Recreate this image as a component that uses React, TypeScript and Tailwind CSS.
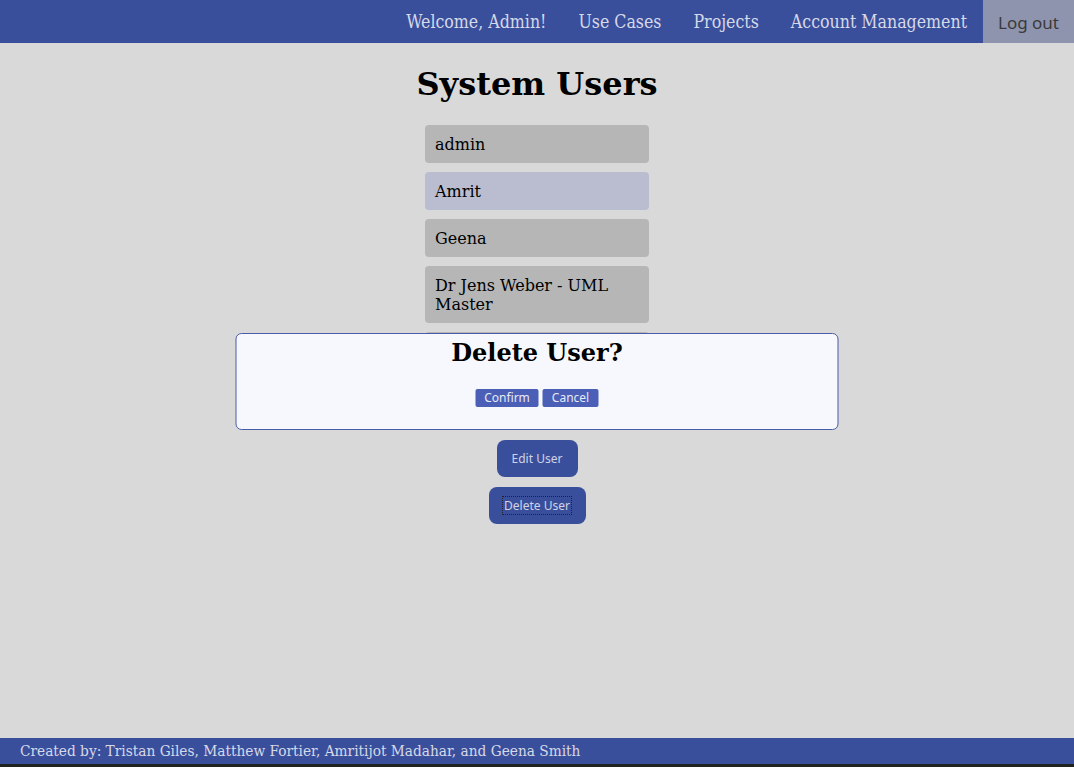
import React from "react";

const condSerif = { fontFamily: '"DejaVu Serif Condensed", "DejaVu Serif", serif', fontStretch: "condensed" as const };

export default function App() {
  const users = ["admin", "Amrit", "Geena", "Dr Jens Weber - UML Master", "", ""];
  return (
    <div className="min-h-[767px] bg-[#d9d9d9] flex flex-col relative" style={{ fontFamily: '"DejaVu Serif", serif' }}>
      <nav className="h-[43px] bg-[#3a4f9c] flex justify-end items-stretch">
        {["Welcome, Admin!", "Use Cases", "Projects", "Account Management"].map((t) => (
          <div key={t} className="px-4 pt-[1px] flex items-center text-[17.6px] text-[#d6d9e8]" style={condSerif}>
            {t}
          </div>
        ))}
        <div
          className="w-[91px] bg-[#8e94ae] flex items-center justify-center text-[17px] text-[#3a3a3a] pt-[2px]"
          style={{ fontFamily: '"Noto Sans", sans-serif' }}
        >
          Log out
        </div>
      </nav>

      <main className="flex-1 flex flex-col items-center">
        <h1 className="text-[32px] font-bold text-black mt-[22px] mb-[22px] leading-[38px]">System Users</h1>
        <div className="relative flex flex-col items-center">
          <div className="flex flex-col gap-[9px] w-[224px]">
            {users.map((u, i) => (
              <div
                key={i}
                className={`rounded-[4px] pl-[10px] pr-2 pt-[10px] pb-[9px] min-h-[38px] text-[16px] leading-[19px] text-black ${
                  i === 1 ? "bg-[#babdcf]" : "bg-[#b6b6b6]"
                }`}
              >
                {u}
              </div>
            ))}
          </div>
          <div className="absolute left-1/2 -translate-x-1/2 top-[208px] w-[603px] h-[97px] bg-[#f7f8fd] border border-[#4a5ba8] rounded-[6px] flex flex-col items-center">
            <div className="text-[24px] font-bold text-black leading-[28px] mt-[5px]">Delete User?</div>
            <div className="flex gap-[4px] mt-[22px]" style={{ fontFamily: '"Noto Sans", sans-serif' }}>
              <button className="h-[18px] w-[63px] bg-[#4a5fb5] text-[#e8eaf6] text-[12px] rounded-[2px] leading-[18px]">Confirm</button>
              <button className="h-[18px] w-[56px] bg-[#4a5fb5] text-[#e8eaf6] text-[12px] rounded-[2px] leading-[18px]">Cancel</button>
            </div>
          </div>
        </div>
        <div className="flex flex-col items-center gap-[10px] mt-[23px]" style={{ fontFamily: '"Noto Sans", sans-serif' }}>
          <button className="h-[37px] w-[81px] rounded-[8px] bg-[#3a4f9c] text-[#cfd3e6] text-[12px]">Edit User</button>
          <button className="h-[37px] w-[97px] rounded-[8px] bg-[#3a4f9c] text-[#cfd3e6] text-[12px]">
            <span className="outline outline-1 outline-dotted outline-[#222] px-[1px]">Delete User</span>
          </button>
        </div>
      </main>

      <footer className="h-[26px] bg-[#3a4f9c] flex items-center pl-[20px] pt-[1px] text-[15.25px] text-[#d6d9e8]" style={condSerif}>
        Created by: Tristan Giles, Matthew Fortier, Amritijot Madahar, and Geena Smith
      </footer>
      <div className="h-[3px] bg-[#1f2420]" />
    </div>
  );
}
